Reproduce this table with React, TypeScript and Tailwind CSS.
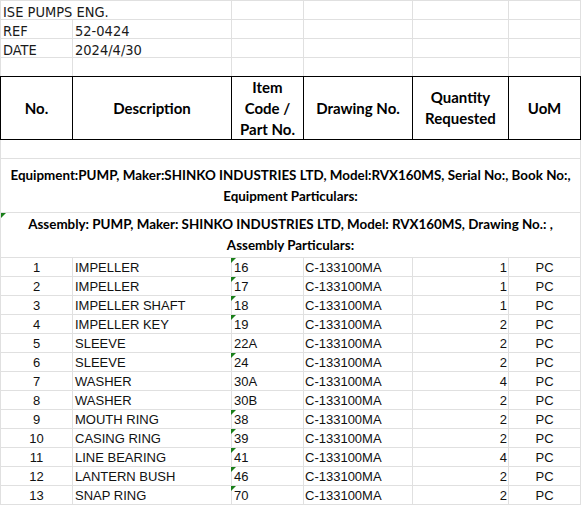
import React from "react";

const rows: [string, string, string, number, boolean][] = [
  ["IMPELLER", "16", "C-133100MA", 1, true],
  ["IMPELLER", "17", "C-133100MA", 1, true],
  ["IMPELLER SHAFT", "18", "C-133100MA", 1, true],
  ["IMPELLER KEY", "19", "C-133100MA", 2, true],
  ["SLEEVE", "22A", "C-133100MA", 2, false],
  ["SLEEVE", "24", "C-133100MA", 2, true],
  ["WASHER", "30A", "C-133100MA", 4, false],
  ["WASHER", "30B", "C-133100MA", 2, false],
  ["MOUTH RING", "38", "C-133100MA", 2, true],
  ["CASING RING", "39", "C-133100MA", 2, true],
  ["LINE BEARING", "41", "C-133100MA", 4, true],
  ["LANTERN BUSH", "46", "C-133100MA", 2, true],
  ["SNAP RING", "70", "C-133100MA", 2, true],
];

function Tri({ className }: { className: string }) {
  return (
    <svg width="5" height="5" viewBox="0 0 5 5" className={className}>
      <polygon points="0,0 5,0 0,5" fill="#1a7f1a" />
    </svg>
  );
}

const topFont = { fontFamily: '"DejaVu Sans Condensed", "DejaVu Sans", sans-serif' };
const boldFont = { fontFamily: 'Lato, "Open Sans", sans-serif' };
const dataFont = { fontFamily: '"Liberation Sans", Arial, sans-serif' };

function TopRow({ a, b, first, last }: { a: string; b?: string; first?: boolean; last?: boolean }) {
  const t = first ? "border-t" : "";
  const bb = last ? "" : "border-b";
  return (
    <div
      className={`flex text-[14.5px] leading-[18px] text-[#1a1a1a] font-stretch-condensed ${first ? "h-[20px]" : last ? "h-[18px]" : "h-[19px]"}`}
      style={topFont}
    >
      <div className={`w-[73px] shrink-0 border-l ${first ? "" : "border-r"} ${t} ${bb} border-[#e0e0e0] pl-[2px] pt-[2px] whitespace-nowrap`}>
        <span className="relative z-10">{a}</span>
      </div>
      <div className={`w-[159px] shrink-0 border-r ${t} ${bb} border-[#e0e0e0] pl-[2px] pt-[2px] whitespace-nowrap`}>
        {b}
      </div>
      <div className={`w-[72px] shrink-0 border-r ${t} ${bb} border-[#e0e0e0]`} />
      <div className={`w-[109px] shrink-0 border-r ${t} ${bb} border-[#e0e0e0]`} />
      <div className={`w-[96px] shrink-0 border-r ${t} ${bb} border-[#e0e0e0]`} />
      <div className={`w-[72px] shrink-0 border-r ${t} ${bb} border-[#e0e0e0]`} />
    </div>
  );
}

export default function App() {
  return (
    <div className="w-[581px] h-[505px] bg-white overflow-hidden text-black">
      <TopRow a="ISE PUMPS ENG." first />
      <TopRow a="REF" b="52-0424" />
      <TopRow a="DATE" b="2024/4/30" />
      <TopRow a="" last />

      {/* header */}
      <div className="flex h-[64px] text-[15px] leading-[21px] font-bold text-center" style={boldFont}>
        <div className="w-[73px] shrink-0 border border-black flex items-center justify-center">No.</div>
        <div className="w-[159px] shrink-0 border-y border-r border-black flex items-center justify-center">Description</div>
        <div className="w-[72px] shrink-0 border-y border-r border-black flex items-center justify-center">
          <div>Item<br />Code /<br />Part No.</div>
        </div>
        <div className="w-[109px] shrink-0 border-y border-r border-black flex items-center justify-center">Drawing No.</div>
        <div className="w-[96px] shrink-0 border-y border-r border-black flex items-center justify-center">
          <div>Quantity<br />Requested</div>
        </div>
        <div className="w-[72px] shrink-0 border-y border-r border-black flex items-center justify-center">UoM</div>
      </div>

      <div className="h-[19px] border-x border-b border-[#e0e0e0]" />

      <div
        className="h-[54px] border-x border-b border-[#e0e0e0] flex flex-col items-center justify-center text-[13.4px] leading-[21px] font-bold whitespace-nowrap"
        style={boldFont}
      >
        <div>Equipment:PUMP, Maker:SHINKO INDUSTRIES LTD, Model:RVX160MS, Serial No:, Book No:,</div>
        <div>Equipment Particulars:</div>
      </div>

      <div
        className="relative h-[45px] border-x border-b border-[#e0e0e0] flex flex-col items-center justify-center text-[13.4px] leading-[21px] font-bold whitespace-nowrap"
        style={boldFont}
      >
        <Tri className="absolute left-0 top-0" />
        <div>Assembly: PUMP, Maker: SHINKO INDUSTRIES LTD, Model: RVX160MS, Drawing No.: ,</div>
        <div>Assembly Particulars:</div>
      </div>

      {rows.map(([desc, code, drw, qty, tri], i) => (
        <div key={i} className="flex h-[19px] text-[13px] leading-[18px] text-[#111]" style={dataFont}>
          <div className="w-[73px] shrink-0 border-x border-b border-[#e0e0e0] text-center pt-[1px]">{i + 1}</div>
          <div className="w-[159px] shrink-0 border-r border-b border-[#e0e0e0] pl-[2px] pt-[1px] whitespace-nowrap">{desc}</div>
          <div className="relative w-[72px] shrink-0 border-r border-b border-[#e0e0e0] pl-[2px] pt-[1px]">
            {tri && <Tri className="absolute left-[-1px] top-0" />}
            {code}
          </div>
          <div className="w-[109px] shrink-0 border-r border-b border-[#e0e0e0] pl-[1px] pt-[1px]">{drw}</div>
          <div className="w-[96px] shrink-0 border-r border-b border-[#e0e0e0] text-right pr-[1px] pt-[1px]">{qty}</div>
          <div className="w-[72px] shrink-0 border-r border-b border-[#e0e0e0] text-center pt-[1px]">PC</div>
        </div>
      ))}
    </div>
  );
}
